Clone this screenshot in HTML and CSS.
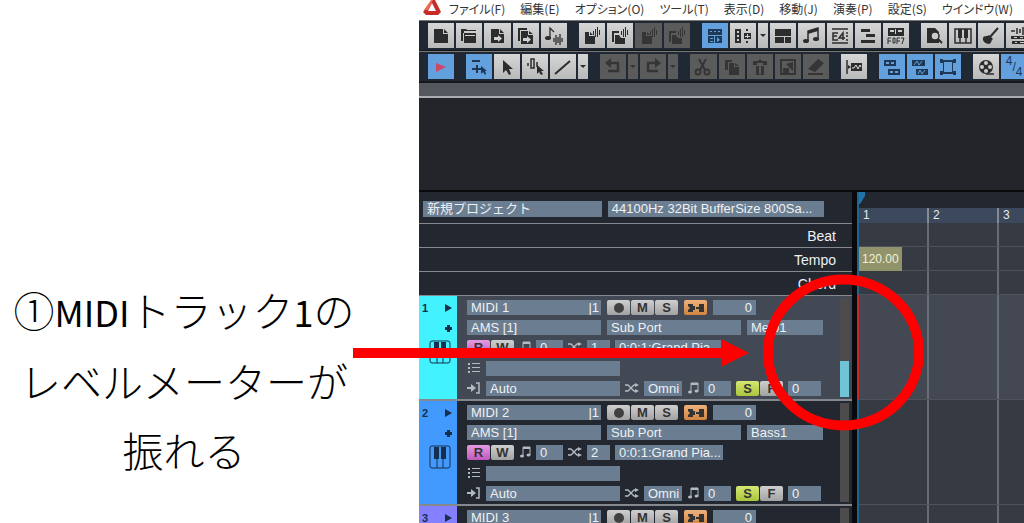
FILE: index.html
```html
<!DOCTYPE html>
<html lang="ja">
<head>
<meta charset="utf-8">
<title>MIDIトラック</title>
<link rel="stylesheet" href="styles.css">
</head>
<body>
<svg class="sprite" aria-hidden="true">
    <symbol id="new" viewBox="0 0 26 26"><path d="M6 6h9v5h5v9H6zM16 6l4 4h-4z"/></symbol>
    <symbol id="open" viewBox="0 0 26 26"><path d="M5 6h5l1 1h9v1H8v2H7v8H5zM8 10h12v10H8z"/><path d="M9 12h10v1H9z" fill="#d0d0d0"/></symbol>
    <symbol id="save" viewBox="0 0 26 26"><path d="M6 6h8v5h5v9H6zM15 6l4 4h-4z"/><path d="M9 14h4v-2l4 3.500-4 3.500v-2H9z" fill="#d0d0d0"/></symbol>
    <symbol id="saveas" viewBox="0 0 26 26"><path d="M5 5h9v2H7v11H5zM8 8h7v4h5v9H8zM16 8l4 3h-4z"/><path d="M10 15h4v-2l4 3.500-4 3.500v-2h-4z" fill="#d0d0d0"/></symbol>
    <symbol id="notewave" viewBox="0 0 26 26"><ellipse cx="7" cy="15" rx="3" ry="2"/><path d="M9 15V5l4 4M13 15v4M15 12v10M17 14v6M19 11v11M21 15v4" fill="none" stroke="currentColor" stroke-width="1.300"/></symbol>
    <symbol id="pagewave" viewBox="0 0 26 26"><path d="M6 9h4v4h6v8H6zM11 9l3 3h-3zM14 8h1v4h-1zM16 6h1v8h-1zM18 4h1v10h-1zM20 7h1v5h-1z"/></symbol>
    <symbol id="pageswave" viewBox="0 0 26 26"><path d="M5 8h7v2H7v9H5zM8 12h4l2 3h4v6H8zM14 8h1v4h-1zM16 6h1v8h-1zM18 4h1v10h-1zM20 7h1v5h-1z"/></symbol>
    <symbol id="console" viewBox="0 0 26 26"><path d="M6 6h14v6H6zM6 13h6v7H6zM13 13h7v7h-7z"/><path d="M8 8h2v1H8zM12 8h2v1h-2zM16 8h2v1h-2zM8 15h3v1H8zM8 18h3v1H8zM15 14l3 3-3 2z" fill="#62a0de"/></symbol>
    <symbol id="inspector" viewBox="0 0 26 26"><path d="M5 6h6v14H5zM14 10h7v6h-7zM16 6h2v2h-2zM16 18h2v2h-2z"/><path d="M7 8h2v2H7zM7 12h2v2H7zM7 16h2v2H7zM17 11h1v4h-1zM15 13h5v1h-5z" fill="#d0d0d0"/></symbol>
    <symbol id="panes" viewBox="0 0 26 26"><path d="M5 6h16v7H5zM5 14h9v6H5zM15 14h6v6h-6z"/></symbol>
    <symbol id="notes" viewBox="0 0 26 26"><path d="M9 18V8l10-3v11" fill="none" stroke="currentColor" stroke-width="1.500"/><path d="M9 8l10-3v3L9 11z"/><ellipse cx="7" cy="18" rx="3" ry="2"/><ellipse cx="17" cy="16" rx="3" ry="2"/></symbol>
    <symbol id="eventlist" viewBox="0 0 26 26"><path d="M5 6h16M5 20h16M11 10H6v7h5M6 13h4M16 17v-7l-4 5h6M19 10h2M19 13h2M19 17h2" fill="none" stroke="currentColor" stroke-width="1.500"/></symbol>
    <symbol id="bars" viewBox="0 0 26 26"><path d="M6 6h9v3H6zM11 11h9v3h-9zM6 17h14v3H6z"/></symbol>
    <symbol id="hex" viewBox="0 0 26 26"><path d="M5 5h16v8H5z"/><path d="M7 7h4v2H7zM12 6h1v5h-1zM15 7h4v2h-4z" fill="#d0d0d0"/><path d="M5 21v-6h3M5 18h3M10 15h2v5h-2zM14 21v-6h3M14 18h3M18 15h3l-2 6" fill="none" stroke="currentColor"/></symbol>
    <symbol id="search" viewBox="0 0 26 26"><path d="M6 5h8l4 4v11H6z"/><circle cx="14" cy="13" r="4" fill="#ccc" stroke="currentColor" stroke-width="1.500"/><path d="M17 16l4 4" stroke="currentColor" stroke-width="2"/></symbol>
    <symbol id="piano" viewBox="0 0 26 26"><path d="M5 6h16v14H5zM10 14v6M16 14v6" fill="none" stroke="currentColor" stroke-width="1.500"/><path d="M8 6h4v9H8zM14 6h4v9h-4z"/></symbol>
    <symbol id="guitar" viewBox="0 0 26 26"><path d="M20 5l-8 9" stroke="currentColor" stroke-width="2"/><path d="M5 15c1-3 4-1 6-3l4 4c-2 1-1 4-4 5-3 0-7-3-6-6z"/></symbol>
    <symbol id="wavebox" viewBox="0 0 26 26"><path d="M5 8h4M11 5v6M14 6v4M17 4v8M20 7v3" stroke="currentColor" stroke-width="1.500"/><path d="M5 13h16v3H5zM6 18h15v3H6z"/><path d="M8 14h3v1H8zM14 14h3v1h-3zM9 19h2v1H9zM14 19h4v1h-4z" fill="#d0d0d0"/></symbol>
    <symbol id="play" viewBox="0 0 26 26"><path d="M8 9l10 4-10 5z" fill="#cc4868"/></symbol>
    <symbol id="plus" viewBox="0 0 26 26"><path d="M6 7h8M6 15h9M11 11v8" stroke="currentColor" stroke-width="2"/><path d="M15 12v8l2-2 2 3 1-1-1-3h2z"/></symbol>
    <symbol id="cursor" viewBox="0 0 26 26"><path d="M9 6v13l3-3 3 5 2-1-2-5h4z"/></symbol>
    <symbol id="wavecursor" viewBox="0 0 26 26"><path d="M6 9v3M9 7v7h3V5H9v4M15 8v5" fill="none" stroke="currentColor" stroke-width="1.500"/><path d="M15 11v9l2-2 2 3 2-1-2-3h3z"/></symbol>
    <symbol id="line" viewBox="0 0 26 26"><path d="M5 20L20 7" stroke="currentColor" stroke-width="2"/></symbol>
    <symbol id="undo" viewBox="0 0 26 26"><path d="M9 9h9v8H8" fill="none" stroke="currentColor" stroke-width="2.500"/><path d="M11 4v10L5 9z"/></symbol>
    <symbol id="redo" viewBox="0 0 26 26"><path d="M17 9H8v8h10" fill="none" stroke="currentColor" stroke-width="2.500"/><path d="M15 4v10l6-5z"/></symbol>
    <symbol id="cut" viewBox="0 0 26 26"><path d="M9 5l6 11M16 5l-6 11" stroke="currentColor" stroke-width="2"/><circle cx="8" cy="18" r="2.500" fill="none" stroke="currentColor" stroke-width="2"/><circle cx="17" cy="18" r="2.500" fill="none" stroke="currentColor" stroke-width="2"/></symbol>
    <symbol id="copy" viewBox="0 0 26 26"><path d="M6 6h7v2h-4v8H6zM10 9h5v4h5v8H10zM16 9l4 3h-4z"/></symbol>
    <symbol id="paste" viewBox="0 0 26 26"><path d="M6 7h5l2-2 2 2h5v4h-4V9h-6v2H6zM9 12h8v9H9z"/><path d="M12 9h2v11h-2z" fill="#5b5b5b"/></symbol>
    <symbol id="select" viewBox="0 0 26 26"><path d="M6 6h14v14H6z" fill="none" stroke="currentColor" stroke-width="2"/><path d="M8 14h6v5H8zM18 8v9l-7-7z"/></symbol>
    <symbol id="erase" viewBox="0 0 26 26"><path d="M5 15L15 5l6 4-9 9zM5 19h15v2H5z"/></symbol>
    <symbol id="envelope" viewBox="0 0 26 26"><path d="M6 6v14" stroke="currentColor" stroke-width="1.500"/><path d="M10 9h11v8H10zM7 11l3 2-3 2z"/><path d="M11 14h2l2-3 2 4 2-4 1 2" stroke="#ddd" fill="none"/></symbol>
    <symbol id="boxes" viewBox="0 0 26 26"><path d="M5 6h12v6H5zM9 15h12v6H9z"/><path d="M7 8h3v2H7zM12 8h3v2h-3zM11 17h3v2h-3zM16 17h3v2h-3z" fill="#62a0de"/></symbol>
    <symbol id="waves" viewBox="0 0 26 26"><path d="M5 6h13v6H5zM9 15h12v6H9z"/><path d="M7 11l3-4 2 4 3-4M11 20l2-4 2 4 3-4" fill="none" stroke="#62a0de"/></symbol>
    <symbol id="frame" viewBox="0 0 26 26"><path d="M5 6h16v2H5zM5 18h16v2H5zM8 8h1v10H8zM17 8h1v10h-1zM5 5h3v4H5zM18 5h3v4h-3zM5 17h3v4H5zM18 17h3v4h-3z"/></symbol>
    <symbol id="reel" viewBox="0 0 26 26"><circle cx="13" cy="13" r="7"/><path d="M13 20h8" stroke="currentColor" stroke-width="1.500"/><g fill="#ccc"><circle cx="13" cy="9" r="2"/><circle cx="13" cy="17" r="2"/><circle cx="9" cy="13" r="2"/><circle cx="17" cy="13" r="2"/></g></symbol>
    <symbol id="keys" viewBox="0 0 22 24"><rect x="1" y="1" width="20" height="22" rx="2" fill="none" stroke="currentColor"/><path d="M8 12v11M14 12v11" stroke="currentColor"/><path d="M5 2h5v12H5zM12 2h5v12h-5z"/></symbol>
    <symbol id="note" viewBox="0 0 12 14"><path d="M4 11V2h7v8" fill="none" stroke="currentColor"/><path d="M4 2h7v2H4z"/><ellipse cx="3" cy="11" rx="2" ry="1.500"/><ellipse cx="9.500" cy="10" rx="2" ry="1.500"/></symbol>
    <symbol id="shuffle" viewBox="0 0 14 14"><path d="M0 4h3l6 6h3M0 10h3l6-6h3" fill="none" stroke="currentColor" stroke-width="1.300"/><path d="M10 2l4 2-4 2zM10 8l4 2-4 2z"/></symbol>
    <symbol id="list" viewBox="0 0 14 14"><path d="M1 2h2v2H1zM5 2h8v1H5zM1 6h2v2H1zM5 6h8v1H5zM1 10h2v2H1zM5 10h8v1H5z"/></symbol>
    <symbol id="input" viewBox="0 0 14 14"><path d="M0 6h4V3l5 4-5 4V8H0z"/><path d="M9 2h3v10H9" fill="none" stroke="currentColor" stroke-width="1.500"/></symbol>
    <symbol id="plug" viewBox="0 0 18 12"><path d="M1 2h5v2h2v4H6v2H1V8l2-2-2-2zM17 2h-5v3H9v2h3v3h5z"/></symbol>
</svg>

<main class="page">
    <section class="note">
        <p>①<span>MIDI</span>トラック<span>1</span>の<br>レベルメーターが<br>振れる</p>
    </section>

    <section class="daw">
        <header class="titlebar">
            <svg class="logo" viewBox="0 0 18 16"><path d="M9 0h3l6 12-3 3H3l-3-3z" fill="#c72d27"/><path d="M9 3l4 8H5z" fill="#fff"/><path d="M8 0h2L5 10H1z" fill="#ec6b57"/></svg>
            <nav class="menu">
                <a href="#">ファイル(F)</a>
                <a href="#">編集(E)</a>
                <a href="#">オプション(O)</a>
                <a href="#">ツール(T)</a>
                <a href="#">表示(D)</a>
                <a href="#">移動(J)</a>
                <a href="#">演奏(P)</a>
                <a href="#">設定(S)</a>
                <a href="#">ウインドウ(W)</a>
            </nav>
        </header>
        <div class="toolbar file-bar" data-icons="new open save saveas notewave | pagewave pageswave -pagewave -pageswave | +console inspector v panes notes eventlist bars hex | search piano guitar wavebox"></div>
        <div class="toolbar edit-bar" data-icons="+play | +plus cursor wavecursor line v | -undo -v -redo -v | -cut -copy -paste -select -erase | envelope | +boxes +waves +frame | reel +beat"></div>
        <div class="strip"></div>
        <div class="overview"></div>

        <div class="workspace">
            <div class="panel">
                <div class="project">
                    <input class="field" aria-label="プロジェクト名" value="新規プロジェクト">
                    <span class="field">44100Hz 32Bit BufferSize 800Sa...</span>
                </div>
                <div class="lane">Beat</div>
                <div class="lane">Tempo</div>
                <div class="lane">Chord</div>
                <div id="trackList"></div>
            </div>
            <div class="timeline">
                <div class="locator"><svg viewBox="0 0 6 12"><path d="M0 0h6v4L1 12H0z" fill="#2273a9"/></svg></div>
                <div class="ruler"><span>1</span><span>2</span><span>3</span></div>
                <div class="grid">
                    <div class="cell"></div>
                    <div class="cell"><span class="tempo">120.00</span></div>
                    <div class="cell"></div>
                    <div class="clip active"></div>
                    <div class="clip"></div>
                    <div class="clip"></div>
                </div>
            </div>
        </div>
    </section>

    <svg class="marks" viewBox="0 0 1024 523" aria-hidden="true">
        <path d="M353 348h368v-9l28 14-28 14v-9H353z" fill="#f00"/>
        <ellipse cx="843.500" cy="352.500" rx="75.500" ry="73" fill="none" stroke="#f00" stroke-width="10"/>
    </svg>
</main>

<script>
const icon = (name, cls = 'icon') => `<svg class="${cls}"><use href="#${name}"></use></svg>`;

document.querySelectorAll('.toolbar').forEach(bar => {
    bar.innerHTML = bar.dataset.icons.split(' ').map(item => {
        if (item === '|') return '<i class="sep"></i>';
        const state = item[0] === '+' ? ' on' : item[0] === '-' ? ' off' : '';
        const name = item.replace(/^[+-]/, '');
        if (name === 'v') return `<button class="tool drop${state}" aria-label="menu"><i class="caret"></i></button>`;
        if (name === 'beat') return `<button class="tool beat${state}"><sup>4</sup>/<sub>4</sub></button>`;
        return `<button class="tool${state}" aria-label="${name}">${icon(name)}</button>`;
    }).join('');
});

const tracks = [
    { no: 1, patch: 'Melo1', color: 'cyan', selected: true },
    { no: 2, patch: 'Bass1', color: 'blue' },
    { no: 3, patch: 'Drums', color: 'violet' }
];

const field = (cls, label, value) => `<input class="field ${cls}" aria-label="${label}" value="${value}">`;

document.getElementById('trackList').innerHTML = tracks.map(t => `
    <article class="track ${t.selected ? 'selected' : ''}">
        <div class="tag ${t.color}">
            <b>${t.no}</b><i class="expand"></i><i class="add"></i>
            ${icon('keys', 'keys')}
        </div>
        <div class="controls">
            <div class="row">
                <label class="field name"><input aria-label="Name" value="MIDI ${t.no}"><span>|1</span></label>
                <span class="switches">
                    <button class="sw" aria-label="Rec"><i class="dot"></i></button><button class="sw">M</button><button class="sw">S</button>
                </span>
                <button class="sw thru" aria-label="Thru">${icon('plug', 'plug')}</button>
                ${field('volume', 'Volume', 0)}
            </div>
            <div class="row">
                ${field('name', 'Port', 'AMS [1]')}
                ${field('sub', 'Sub port', 'Sub Port')}
                ${field('patch', 'Memo', t.patch)}
            </div>
            <div class="row tight">
                <span class="switches"><button class="sw read">R</button><button class="sw">W</button></span>
                ${icon('note', 'mini key')}
                ${field('num', 'Key', 0)}
                ${icon('shuffle', 'mini')}
                ${field('chan', 'Channel', t.no)}
                ${field('bank', 'Bank', '0:0:1:Grand Pia...')}
            </div>
            <div class="row input-row">
                ${icon('list', 'mini')}
                ${field('wide', 'Comment', '')}
            </div>
            <div class="row input-row">
                ${icon('input', 'mini')}
                ${field('wide', 'Input', 'Auto')}
                ${icon('shuffle', 'mini')}
                ${field('omni', 'Input channel', 'Omni')}
                ${icon('note', 'mini key')}
                ${field('num', 'Transpose', 0)}
                <span class="switches"><button class="sw solo">S</button><button class="sw">F</button></span>
                ${field('delay', 'Delay', 0)}
            </div>
        </div>
        <div class="meter">${t.selected ? '<div class="level"></div>' : ''}</div>
    </article>`).join('');
</script>
</body>
</html>
```

FILE: styles.css
```css
:root {
    --dark: #23272f;
    --field: #6b7d90;
    --text: #eef1f4;
    --line: #85888d;
    --blue: #62a0de;
}

* {
    box-sizing: border-box;
}

body {
    margin: 0;
    background: #fff;
    font-family: "Liberation Sans", "Noto Sans CJK JP", sans-serif;
    font-size: 13px;
}

button, input {
    font: inherit;
    margin: 0;
    padding: 0;
    border: 0;
}

svg {
    fill: currentColor;
}

.sprite {
    display: none;
}

.page {
    position: relative;
    display: grid;
    grid-template-columns: 419fr 605fr;
    height: 100vh;
    overflow: hidden;
}

.marks {
    position: absolute;
    top: 0;
    left: 0;
    width: 100%;
    pointer-events: none;
}

/* Caption */
.note {
    display: flex;
    align-items: flex-end;
    justify-content: center;
    padding: 0 51px 39px 0;
}

.note p {
    margin: 0;
    font-family: "Noto Sans CJK JP", sans-serif;
    font-size: 41px;
    font-weight: 300;
    line-height: 69px;
    text-align: center;
    white-space: nowrap;
    color: #000;
}

.note span {
    font-size: 36px;
    font-weight: 400;
}

/* Menu and toolbars */
.daw {
    display: flex;
    flex-direction: column;
    min-width: 0;
    overflow: hidden;
    background: var(--dark);
}

.titlebar {
    display: flex;
    gap: 8px;
    height: 20px;
    padding: 0 11px 0 4px;
    background: #fff;
}

.menu {
    display: flex;
    flex: 1;
    justify-content: space-between;
    font-family: "Noto Sans CJK JP", sans-serif;
    font-size: 12px;
    font-feature-settings: "palt";
    line-height: 17px;
    white-space: nowrap;
}

.menu a {
    color: #333;
    text-decoration: none;
}

.logo {
    width: 18px;
    height: 16px;
}

.toolbar {
    display: flex;
    gap: 2px;
    height: 31px;
    padding: 2px 0 2px 9px;
    border-top: 1px solid #777;
    border-bottom: 1px solid #15171b;
    background: #202833;
}

.file-bar {
    margin-right: -8px;
}

.edit-bar {
    margin-right: -3px;
}

.tool {
    flex: 1 1 0;
    min-width: 0;
    display: flex;
    align-items: center;
    justify-content: center;
    background: linear-gradient(#d6d6d6, #b9b9b9);
    color: #2b2c2e;
}

.tool.on {
    background: var(--blue);
    color: #1f3855;
}

.tool.off {
    background: #5b5b5b;
    color: #353535;
}

.tool.drop {
    flex: 0 0 10px;
}

.tool.beat {
    font-size: 12px;
}

.beat sup, .beat sub {
    font-size: 12px;
    line-height: 14px;
}

.beat sup {
    align-self: flex-start;
}

.beat sub {
    align-self: flex-end;
}

.sep {
    flex: 0 0 8px;
}

.icon {
    width: 26px;
    height: 26px;
    flex: none;
}

.caret {
    border: 3px solid transparent;
    border-top-color: currentColor;
    border-bottom: 0;
}

.strip {
    height: 16px;
    border-top: 1px solid #15171b;
    border-bottom: 2px solid #aaadb2;
    background: #54575e;
}

.overview {
    height: 94px;
    border-bottom: 2px solid #08090b;
    background: #24252b;
}

/* Track list */
.workspace {
    display: grid;
    grid-template-columns: 433fr 172fr;
    flex: 1;
    min-height: 0;
    background: #08090b;
}

.panel {
    min-width: 0;
    background: var(--dark);
    color: var(--text);
}

.project {
    display: flex;
    gap: 6px;
    height: 32px;
    padding: 9px 28px 7px 4px;
    border-bottom: 1px solid var(--line);
}

.project .field {
    flex: 178 1 0;
    min-width: 0;
    height: 16px;
    line-height: 16px;
    white-space: nowrap;
}

.project span.field {
    flex-grow: 217;
}

.lane {
    height: 24px;
    padding-right: 16px;
    border-bottom: 1px solid var(--line);
    font-size: 14px;
    line-height: 25px;
    text-align: right;
}

.field {
    height: 15px;
    padding: 0 4px;
    background: var(--field);
    color: var(--text);
    font-size: 13px;
    line-height: 15px;
}

.track {
    display: flex;
    height: 105px;
    border-bottom: 2px solid var(--line);
}

.track.selected {
    background: #424854;
}

.tag {
    display: grid;
    grid-template-columns: 1fr 12px;
    grid-template-rows: 20px 20px 1fr;
    align-items: center;
    width: 38px;
    padding: 2px 0 0 3px;
    color: #16304c;
    font-size: 11px;
}

.cyan {
    background: #42f2ff;
}

.blue {
    background: #429aff;
}

.violet {
    background: #8580ff;
}

.expand {
    width: 0;
    border: 4px solid transparent;
    border-left: 7px solid currentColor;
    border-right: 0;
}

.add {
    grid-column: 2;
    width: 7px;
    height: 7px;
    background: linear-gradient(currentColor, currentColor) center / 7px 3px no-repeat, linear-gradient(currentColor, currentColor) center / 3px 7px no-repeat;
}

.keys {
    grid-column: 1 / 3;
    align-self: start;
    width: 22px;
    height: 24px;
    margin: 2px 0 0 7px;
}

.controls {
    display: flex;
    flex-direction: column;
    gap: 5px;
    flex: 1;
    min-width: 0;
    padding: 4px 0 0 10px;
}

.row {
    display: flex;
    gap: 6px;
    height: 15px;
}

.row.tight {
    gap: 5px;
    margin-bottom: 1px;
}

.input-row {
    gap: 5px;
}

.name {
    width: 134px;
}

label.name {
    display: flex;
    justify-content: space-between;
    padding-right: 2px;
}

label.name input {
    width: 100px;
    background: none;
    color: inherit;
}

.switches {
    display: flex;
    gap: 1px;
}

.sw {
    display: flex;
    align-items: center;
    justify-content: center;
    width: 23px;
    height: 15px;
    border-radius: 2px;
    background: linear-gradient(#cfcfcf, #a2a2a2);
    color: #333;
    font-size: 13px;
    font-weight: bold;
    line-height: 15px;
}

.thru {
    background: linear-gradient(#eeb27c, #cf8440);
}

.read {
    background: linear-gradient(#e49be2, #bf57bd);
}

.solo {
    background: linear-gradient(#d5e873, #a9c53c);
}

.dot {
    width: 10px;
    height: 10px;
    border-radius: 50%;
    background: #404040;
}

.plug {
    width: 18px;
    height: 12px;
}

.mini {
    flex: none;
    width: 14px;
    height: 14px;
    color: #b4bac2;
}

.mini.key {
    width: 12px;
}

.volume {
    width: 43px;
    text-align: right;
}

.sub {
    width: 134px;
}

.patch {
    width: 76px;
}

.num {
    width: 27px;
}

.chan {
    width: 23px;
}

.bank {
    width: 108px;
    padding-right: 0;
}

.wide {
    width: 134px;
}

.omni {
    width: 38px;
    padding-right: 0;
}

.delay {
    width: 33px;
}

.meter {
    display: flex;
    align-items: flex-end;
    width: 9px;
    margin: 2px 3px 2px 0;
    background: #4e4b4d;
}

.level {
    width: 100%;
    height: 36px;
    background: #70c4d7;
}

/* Timeline */
.timeline {
    min-width: 0;
    margin-left: 5px;
    background: #363a43;
    overflow: hidden;
}

.locator, .ruler, .cell, .clip {
    border-left: 2px solid #20658f;
}

.locator {
    height: 16px;
    background: var(--dark);
}

.locator svg {
    display: block;
    width: 6px;
    height: 12px;
}

.ruler {
    display: flex;
    height: 15px;
    background: #3c495c;
    color: #e5e8ec;
    font-size: 12px;
    line-height: 15px;
}

.ruler span {
    flex: 0 0 70px;
    padding-left: 4px;
    border-right: 2px solid #858a93;
}

.grid {
    background: repeating-linear-gradient(90deg, #666b74 0 2px, transparent 2px 70px);
}

.cell {
    height: 24px;
    border-bottom: 1px solid #4d525c;
}

.tempo {
    display: inline-block;
    height: 24px;
    padding: 0 3px;
    background: #91936a;
    color: #f0f0dc;
    font-size: 12px;
    line-height: 24px;
}

.clip {
    height: 105px;
    border-bottom: 1px solid #4d525c;
}

.clip.active {
    border-left-color: #c8262b;
    background: rgba(120, 130, 150, 0.2);
}
```
